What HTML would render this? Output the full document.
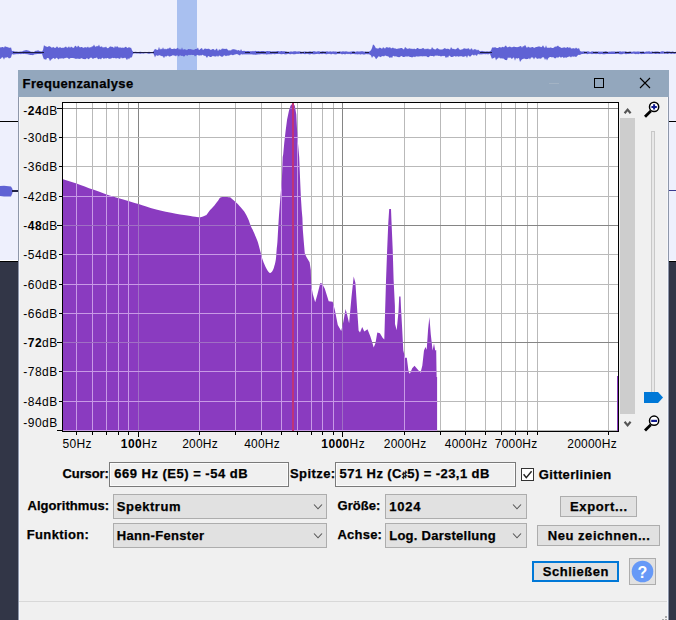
<!DOCTYPE html>
<html><head><meta charset="utf-8"><style>
html,body{margin:0;padding:0;width:676px;height:620px;overflow:hidden;background:#eef0fd;font-family:"Liberation Sans",sans-serif;}
.a{position:absolute;}
.t{position:absolute;white-space:nowrap;color:#000;font-size:12px;line-height:14px;}
.b{font-weight:bold;font-size:13px;}
.box{position:absolute;box-sizing:border-box;}
</style></head><body>
<svg class="a" style="left:0;top:0" width="676" height="620" viewBox="0 0 676 620">
  <!-- background -->
  <rect x="0" y="0" width="676" height="620" fill="#eef0fd"/>
  <rect x="0" y="260" width="676" height="1" fill="#ffffff"/>
  <rect x="0" y="261" width="676" height="1" fill="#000000"/>
  <rect x="0" y="262" width="676" height="358" fill="#323647"/>
  <rect x="0" y="121" width="18" height="1" fill="#000"/>
  <rect x="669" y="121" width="7" height="1" fill="#000"/>
  <rect x="177" y="0" width="20" height="70" fill="#a9c0f0"/>
  <!-- waveform top -->
  <rect x="0" y="52" width="676" height="1" fill="#222244"/>
  <path d="M0,47.3 L1,47.4 L2,46.9 L3,47.0 L4,47.8 L5,46.1 L6,47.1 L7,46.7 L8,47.6 L9,47.4 L10,47.9 L11,47.3 L12,51.3 L13,50.8 L14,51.3 L15,51.5 L16,51.5 L17,51.5 L18,51.8 L19,51.7 L20,51.4 L21,51.6 L22,51.5 L23,51.0 L24,50.5 L25,50.4 L26,50.1 L27,50.2 L28,50.6 L29,50.7 L30,51.3 L31,51.8 L32,51.7 L33,51.8 L34,51.9 L35,51.0 L36,50.8 L37,50.7 L38,50.3 L39,50.7 L40,51.3 L41,51.2 L42,51.5 L43,49.9 L44,44.9 L45,46.3 L46,46.2 L47,47.1 L48,46.7 L49,45.9 L50,46.5 L51,47.0 L52,47.9 L53,46.8 L54,47.6 L55,48.0 L56,47.5 L57,46.3 L58,47.5 L59,48.1 L60,46.7 L61,47.9 L62,47.7 L63,47.7 L64,47.7 L65,47.0 L66,46.5 L67,47.7 L68,47.4 L69,46.2 L70,47.9 L71,46.6 L72,47.2 L73,47.8 L74,47.8 L75,45.7 L76,46.1 L77,47.4 L78,45.5 L79,46.6 L80,47.5 L81,47.0 L82,47.1 L83,47.7 L84,47.8 L85,47.0 L86,47.6 L87,47.4 L88,46.6 L89,48.0 L90,47.1 L91,47.5 L92,46.3 L93,46.4 L94,44.5 L95,46.5 L96,46.7 L97,45.8 L98,46.4 L99,44.4 L100,46.9 L101,46.6 L102,46.4 L103,47.7 L104,47.0 L105,47.4 L106,46.6 L107,47.9 L108,48.2 L109,47.6 L110,46.6 L111,46.6 L112,47.0 L113,46.8 L114,48.3 L115,45.8 L116,47.5 L117,45.9 L118,47.0 L119,47.8 L120,47.2 L121,47.8 L122,47.7 L123,47.5 L124,48.1 L125,46.9 L126,46.8 L127,47.7 L128,47.9 L129,46.7 L130,47.9 L131,47.5 L132,50.2 L133,51.8 L134,51.9 L135,51.7 L136,51.8 L137,52.1 L138,51.9 L139,52.0 L140,51.7 L141,51.8 L142,52.3 L143,52.0 L144,52.3 L145,51.8 L146,52.3 L147,52.1 L148,52.0 L149,51.7 L150,52.0 L151,52.1 L152,52.3 L153,51.7 L154,50.5 L155,48.7 L156,49.6 L157,49.7 L158,49.9 L159,46.7 L160,49.8 L161,48.5 L162,49.6 L163,47.3 L164,49.5 L165,48.4 L166,49.5 L167,48.8 L168,48.5 L169,48.6 L170,47.2 L171,48.7 L172,49.0 L173,48.9 L174,48.5 L175,48.7 L176,49.1 L177,48.3 L178,47.8 L179,49.8 L180,48.5 L181,50.1 L182,47.3 L183,50.0 L184,48.9 L185,49.4 L186,49.5 L187,50.2 L188,48.9 L189,49.0 L190,49.2 L191,48.9 L192,49.7 L193,49.4 L194,50.0 L195,49.1 L196,49.0 L197,48.8 L198,47.5 L199,50.2 L200,49.2 L201,48.6 L202,47.9 L203,50.2 L204,49.0 L205,48.4 L206,48.7 L207,48.9 L208,48.7 L209,48.7 L210,49.4 L211,49.9 L212,49.3 L213,49.1 L214,49.2 L215,50.5 L216,48.9 L217,48.4 L218,51.2 L219,49.3 L220,49.7 L221,49.8 L222,48.5 L223,48.8 L224,48.7 L225,48.9 L226,48.8 L227,48.7 L228,50.2 L229,50.4 L230,50.3 L231,50.5 L232,49.3 L233,49.4 L234,49.1 L235,49.7 L236,49.4 L237,50.5 L238,50.2 L239,50.1 L240,51.2 L241,49.0 L242,51.0 L243,51.1 L244,50.7 L245,51.0 L246,51.3 L247,51.1 L248,51.0 L249,50.9 L250,51.4 L251,51.1 L252,51.4 L253,50.8 L254,51.4 L255,50.8 L256,51.0 L257,51.2 L258,50.9 L259,51.0 L260,51.4 L261,51.0 L262,51.1 L263,51.1 L264,51.0 L265,51.5 L266,51.3 L267,50.9 L268,51.0 L269,51.3 L270,51.1 L271,51.4 L272,51.4 L273,51.3 L274,51.4 L275,51.2 L276,51.5 L277,51.1 L278,51.1 L279,51.3 L280,51.4 L281,51.1 L282,51.1 L283,51.6 L284,51.1 L285,51.4 L286,51.2 L287,51.8 L288,51.7 L289,51.8 L290,51.8 L291,51.3 L292,51.8 L293,51.4 L294,51.3 L295,51.3 L296,51.3 L297,51.8 L298,51.3 L299,51.4 L300,51.3 L301,51.8 L302,51.8 L303,51.7 L304,51.5 L305,51.4 L306,51.5 L307,51.8 L308,51.8 L309,51.4 L310,51.3 L311,51.6 L312,51.7 L313,51.3 L314,51.2 L315,51.3 L316,51.8 L317,51.6 L318,51.2 L319,51.3 L320,51.5 L321,51.8 L322,51.3 L323,51.2 L324,51.4 L325,51.4 L326,51.6 L327,51.3 L328,51.5 L329,51.8 L330,51.3 L331,51.6 L332,51.7 L333,51.3 L334,51.6 L335,51.4 L336,51.5 L337,51.7 L338,51.8 L339,51.5 L340,51.3 L341,51.7 L342,51.5 L343,51.2 L344,51.6 L345,51.6 L346,51.3 L347,51.4 L348,51.8 L349,51.7 L350,51.7 L351,51.5 L352,51.5 L353,51.2 L354,51.2 L355,51.7 L356,51.7 L357,51.3 L358,51.5 L359,51.5 L360,51.6 L361,51.3 L362,51.2 L363,51.3 L364,51.8 L365,51.4 L366,51.4 L367,51.8 L368,51.6 L369,51.8 L370,51.1 L371,50.3 L372,48.1 L373,44.5 L374,45.1 L375,46.5 L376,48.6 L377,48.0 L378,49.1 L379,47.7 L380,47.8 L381,47.9 L382,49.0 L383,47.3 L384,47.8 L385,48.7 L386,47.2 L387,47.2 L388,47.6 L389,47.7 L390,46.9 L391,48.6 L392,48.1 L393,47.5 L394,48.4 L395,48.3 L396,48.7 L397,49.1 L398,48.4 L399,48.5 L400,48.2 L401,48.0 L402,48.0 L403,49.0 L404,49.5 L405,47.0 L406,47.8 L407,48.7 L408,48.8 L409,48.5 L410,48.2 L411,49.0 L412,48.6 L413,49.2 L414,48.6 L415,49.0 L416,49.2 L417,47.9 L418,47.9 L419,49.1 L420,48.8 L421,49.1 L422,48.4 L423,47.9 L424,48.5 L425,49.6 L426,48.6 L427,49.3 L428,48.3 L429,49.4 L430,48.9 L431,49.4 L432,46.9 L433,48.4 L434,49.1 L435,49.5 L436,49.3 L437,48.0 L438,48.4 L439,49.3 L440,49.4 L441,49.4 L442,49.5 L443,49.3 L444,48.4 L445,48.1 L446,48.9 L447,48.8 L448,48.7 L449,49.1 L450,49.7 L451,47.1 L452,48.6 L453,49.0 L454,48.8 L455,49.5 L456,48.9 L457,48.6 L458,47.4 L459,49.0 L460,49.7 L461,49.7 L462,49.3 L463,49.3 L464,48.1 L465,48.7 L466,48.5 L467,48.9 L468,48.2 L469,48.4 L470,49.9 L471,48.6 L472,48.6 L473,50.5 L474,49.0 L475,49.5 L476,49.3 L477,50.4 L478,49.4 L479,50.6 L480,51.2 L481,51.3 L482,50.8 L483,51.2 L484,51.3 L485,51.5 L486,51.4 L487,51.3 L488,51.6 L489,51.6 L490,51.3 L491,50.4 L492,47.7 L493,47.2 L494,47.8 L495,47.1 L496,47.7 L497,48.1 L498,48.1 L499,47.2 L500,47.0 L501,47.7 L502,47.1 L503,46.8 L504,47.6 L505,46.0 L506,45.4 L507,47.3 L508,47.2 L509,46.8 L510,46.5 L511,47.3 L512,47.2 L513,47.0 L514,46.5 L515,47.1 L516,46.9 L517,47.2 L518,46.9 L519,46.7 L520,46.2 L521,46.0 L522,47.7 L523,46.1 L524,46.5 L525,44.8 L526,46.4 L527,47.9 L528,46.5 L529,47.2 L530,47.5 L531,47.4 L532,47.1 L533,47.0 L534,48.0 L535,47.6 L536,46.9 L537,47.0 L538,46.5 L539,46.5 L540,46.4 L541,47.2 L542,46.7 L543,45.2 L544,47.0 L545,47.9 L546,45.3 L547,48.0 L548,47.4 L549,48.0 L550,47.6 L551,47.5 L552,48.1 L553,47.9 L554,47.4 L555,46.6 L556,46.8 L557,46.2 L558,45.5 L559,46.7 L560,47.1 L561,47.7 L562,48.0 L563,47.4 L564,47.5 L565,47.2 L566,48.3 L567,46.9 L568,47.3 L569,47.9 L570,47.0 L571,48.6 L572,48.6 L573,48.2 L574,48.2 L575,48.8 L576,47.6 L577,48.5 L578,48.8 L579,48.1 L580,50.8 L581,51.4 L582,51.5 L583,51.5 L584,51.3 L585,51.5 L586,51.6 L587,51.4 L588,51.3 L589,51.5 L590,51.9 L591,51.7 L592,51.2 L593,51.5 L594,51.4 L595,51.7 L596,51.3 L597,51.7 L598,51.4 L599,51.6 L600,51.8 L601,51.5 L602,51.7 L603,51.5 L604,51.7 L605,51.3 L606,51.2 L607,51.6 L608,51.9 L609,51.5 L610,51.8 L611,51.4 L612,51.5 L613,51.4 L614,51.6 L615,51.4 L616,51.8 L617,51.5 L618,51.4 L619,51.6 L620,51.3 L621,51.4 L622,51.8 L623,51.3 L624,51.8 L625,51.2 L626,51.5 L627,51.7 L628,51.9 L629,51.6 L630,51.5 L631,51.6 L632,51.9 L633,51.6 L634,51.5 L635,51.6 L636,51.8 L637,51.5 L638,51.6 L639,51.5 L640,51.8 L641,51.4 L642,51.8 L643,51.3 L644,51.7 L645,51.9 L646,51.5 L647,51.4 L648,51.6 L649,51.3 L650,51.6 L651,51.9 L652,51.3 L653,51.8 L654,51.7 L655,51.4 L656,51.6 L657,51.4 L658,51.6 L659,51.7 L660,51.9 L661,51.5 L662,51.3 L663,51.3 L664,51.4 L665,51.8 L666,51.8 L667,51.2 L668,51.5 L669,51.5 L670,51.4 L671,51.9 L672,51.5 L673,51.5 L674,51.9 L675,51.9 L676,51.7 L676,53.6 L675,53.8 L674,53.9 L673,53.5 L672,53.8 L671,53.9 L670,53.5 L669,53.6 L668,54.0 L667,54.0 L666,53.5 L665,53.9 L664,53.8 L663,53.5 L662,54.0 L661,53.6 L660,53.9 L659,53.9 L658,53.7 L657,53.8 L656,54.0 L655,54.1 L654,53.5 L653,53.7 L652,53.8 L651,53.9 L650,53.8 L649,53.9 L648,53.6 L647,53.9 L646,53.6 L645,54.1 L644,54.1 L643,54.1 L642,53.9 L641,54.2 L640,53.6 L639,53.9 L638,54.2 L637,53.8 L636,54.2 L635,53.9 L634,53.8 L633,53.6 L632,54.0 L631,53.8 L630,53.8 L629,54.0 L628,53.9 L627,53.9 L626,54.2 L625,54.0 L624,53.6 L623,53.9 L622,54.2 L621,54.2 L620,54.2 L619,54.0 L618,53.7 L617,53.7 L616,53.9 L615,54.1 L614,53.9 L613,53.9 L612,54.1 L611,53.9 L610,54.0 L609,54.1 L608,54.0 L607,53.9 L606,54.1 L605,54.2 L604,54.2 L603,54.2 L602,54.1 L601,54.1 L600,54.2 L599,54.0 L598,53.9 L597,53.7 L596,54.3 L595,53.7 L594,53.9 L593,53.7 L592,54.2 L591,53.7 L590,53.8 L589,53.8 L588,54.0 L587,54.2 L586,53.6 L585,53.9 L584,53.8 L583,53.9 L582,54.1 L581,54.2 L580,54.9 L579,54.8 L578,55.1 L577,56.2 L576,56.9 L575,56.6 L574,56.6 L573,56.7 L572,56.3 L571,57.4 L570,56.5 L569,56.4 L568,57.1 L567,57.3 L566,58.0 L565,57.0 L564,58.2 L563,57.2 L562,56.8 L561,58.1 L560,56.8 L559,56.8 L558,57.9 L557,57.0 L556,58.1 L555,58.5 L554,57.7 L553,56.9 L552,57.4 L551,57.0 L550,56.9 L549,57.5 L548,58.5 L547,60.6 L546,58.3 L545,59.9 L544,57.4 L543,57.2 L542,57.4 L541,58.7 L540,58.6 L539,58.6 L538,58.5 L537,58.9 L536,57.6 L535,57.6 L534,59.5 L533,57.6 L532,57.6 L531,57.6 L530,59.4 L529,58.0 L528,59.1 L527,59.1 L526,59.2 L525,58.7 L524,58.4 L523,58.9 L522,59.3 L521,60.5 L520,61.9 L519,58.0 L518,58.3 L517,58.7 L516,57.7 L515,60.8 L514,57.5 L513,57.8 L512,59.0 L511,58.3 L510,57.3 L509,58.3 L508,57.3 L507,60.2 L506,60.1 L505,59.9 L504,58.7 L503,58.6 L502,58.5 L501,58.3 L500,58.5 L499,57.3 L498,58.6 L497,58.7 L496,60.5 L495,57.1 L494,58.2 L493,57.9 L492,58.9 L491,56.4 L490,53.7 L489,54.1 L488,54.4 L487,54.1 L486,54.3 L485,54.2 L484,54.0 L483,54.3 L482,54.3 L481,54.4 L480,54.2 L479,54.4 L478,53.8 L477,55.7 L476,55.4 L475,54.4 L474,55.7 L473,54.7 L472,54.7 L471,56.0 L470,56.8 L469,55.9 L468,55.3 L467,57.9 L466,55.7 L465,56.6 L464,56.6 L463,57.1 L462,56.3 L461,56.3 L460,56.3 L459,56.4 L458,56.7 L457,55.8 L456,57.0 L455,56.0 L454,56.3 L453,56.7 L452,56.9 L451,56.9 L450,55.9 L449,55.4 L448,57.8 L447,56.4 L446,58.3 L445,56.2 L444,55.8 L443,56.2 L442,55.8 L441,56.7 L440,55.8 L439,56.1 L438,55.7 L437,55.5 L436,55.8 L435,55.6 L434,56.7 L433,56.1 L432,55.9 L431,56.1 L430,55.8 L429,57.1 L428,57.3 L427,56.7 L426,56.0 L425,56.5 L424,56.1 L423,56.4 L422,56.2 L421,56.3 L420,56.3 L419,56.5 L418,56.5 L417,56.6 L416,56.3 L415,57.3 L414,56.4 L413,56.9 L412,57.6 L411,57.1 L410,56.9 L409,56.6 L408,56.3 L407,56.7 L406,56.3 L405,56.7 L404,57.0 L403,57.1 L402,56.2 L401,56.0 L400,56.9 L399,57.2 L398,57.0 L397,56.7 L396,56.2 L395,56.5 L394,56.2 L393,55.8 L392,58.2 L391,56.8 L390,58.2 L389,57.1 L388,56.3 L387,56.2 L386,55.7 L385,55.5 L384,56.6 L383,56.1 L382,56.3 L381,56.7 L380,57.2 L379,56.1 L378,57.0 L377,58.2 L376,59.3 L375,57.3 L374,56.2 L373,56.3 L372,57.9 L371,55.4 L370,54.8 L369,54.2 L368,54.3 L367,54.3 L366,54.0 L365,54.5 L364,54.4 L363,54.4 L362,54.0 L361,54.4 L360,54.5 L359,54.0 L358,54.4 L357,54.2 L356,54.3 L355,54.3 L354,54.0 L353,54.0 L352,54.0 L351,54.3 L350,54.3 L349,53.8 L348,54.3 L347,53.8 L346,54.0 L345,54.4 L344,54.1 L343,53.9 L342,54.4 L341,53.8 L340,53.8 L339,54.1 L338,53.8 L337,53.9 L336,54.4 L335,54.2 L334,54.2 L333,53.8 L332,54.0 L331,54.4 L330,53.8 L329,53.9 L328,53.8 L327,54.2 L326,54.2 L325,53.9 L324,53.8 L323,53.7 L322,54.2 L321,53.8 L320,54.1 L319,54.2 L318,53.7 L317,53.9 L316,54.1 L315,54.2 L314,54.3 L313,54.2 L312,54.0 L311,54.0 L310,54.4 L309,54.3 L308,54.1 L307,53.8 L306,54.1 L305,54.3 L304,54.1 L303,53.8 L302,53.8 L301,54.2 L300,53.8 L299,53.7 L298,54.0 L297,53.8 L296,54.0 L295,54.2 L294,54.3 L293,54.2 L292,53.7 L291,54.2 L290,54.3 L289,54.0 L288,53.8 L287,54.2 L286,54.3 L285,54.4 L284,54.1 L283,54.1 L282,54.2 L281,54.2 L280,54.1 L279,53.8 L278,53.9 L277,54.1 L276,54.1 L275,54.3 L274,54.2 L273,53.8 L272,54.2 L271,54.2 L270,54.2 L269,54.3 L268,54.3 L267,54.5 L266,54.4 L265,54.0 L264,54.4 L263,54.0 L262,54.3 L261,54.1 L260,54.6 L259,54.3 L258,54.6 L257,54.6 L256,54.7 L255,54.7 L254,54.4 L253,54.7 L252,54.2 L251,54.6 L250,54.2 L249,54.5 L248,54.2 L247,54.4 L246,54.2 L245,54.6 L244,54.2 L243,54.5 L242,54.6 L241,54.1 L240,55.6 L239,54.9 L238,54.4 L237,54.1 L236,54.2 L235,54.4 L234,54.7 L233,55.3 L232,55.0 L231,54.6 L230,55.3 L229,55.6 L228,55.8 L227,55.6 L226,56.3 L225,55.6 L224,55.3 L223,56.4 L222,56.7 L221,56.6 L220,55.8 L219,55.6 L218,57.1 L217,55.6 L216,56.8 L215,56.3 L214,56.5 L213,55.7 L212,56.5 L211,56.9 L210,57.0 L209,56.3 L208,55.9 L207,58.1 L206,56.6 L205,55.5 L204,56.1 L203,54.8 L202,54.9 L201,55.8 L200,54.9 L199,55.9 L198,54.7 L197,55.3 L196,55.4 L195,56.4 L194,55.1 L193,55.1 L192,55.1 L191,54.8 L190,55.2 L189,54.8 L188,55.2 L187,55.9 L186,54.8 L185,55.8 L184,56.8 L183,56.0 L182,55.8 L181,56.1 L180,55.1 L179,56.4 L178,55.9 L177,55.0 L176,56.6 L175,55.4 L174,55.8 L173,55.0 L172,55.7 L171,56.0 L170,56.4 L169,56.6 L168,55.4 L167,56.0 L166,56.8 L165,55.9 L164,58.3 L163,56.3 L162,56.2 L161,55.7 L160,55.5 L159,55.1 L158,56.1 L157,55.6 L156,55.3 L155,57.5 L154,54.7 L153,53.2 L152,53.5 L151,53.3 L150,53.8 L149,53.7 L148,53.8 L147,53.2 L146,53.3 L145,53.3 L144,53.5 L143,53.7 L142,53.2 L141,53.8 L140,53.8 L139,53.5 L138,53.5 L137,53.6 L136,53.6 L135,53.2 L134,53.5 L133,53.7 L132,57.0 L131,57.8 L130,57.5 L129,59.6 L128,58.0 L127,60.2 L126,58.6 L125,57.5 L124,58.2 L123,58.0 L122,58.4 L121,57.2 L120,58.9 L119,58.4 L118,58.2 L117,57.9 L116,58.7 L115,57.8 L114,58.2 L113,58.0 L112,57.7 L111,58.8 L110,58.6 L109,59.0 L108,57.9 L107,58.1 L106,58.8 L105,57.7 L104,59.3 L103,58.0 L102,57.8 L101,59.4 L100,58.5 L99,59.0 L98,59.2 L97,57.6 L96,57.8 L95,58.2 L94,58.0 L93,59.2 L92,58.1 L91,57.5 L90,58.1 L89,58.9 L88,59.2 L87,57.7 L86,59.0 L85,59.3 L84,58.9 L83,59.1 L82,58.3 L81,58.3 L80,59.0 L79,58.8 L78,58.8 L77,58.4 L76,58.9 L75,58.4 L74,58.2 L73,58.1 L72,57.9 L71,57.9 L70,58.3 L69,59.3 L68,58.1 L67,57.8 L66,57.8 L65,58.3 L64,58.2 L63,58.9 L62,57.7 L61,59.1 L60,57.9 L59,59.3 L58,59.3 L57,57.7 L56,58.1 L55,59.2 L54,58.3 L53,58.0 L52,59.2 L51,59.5 L50,61.3 L49,58.6 L48,58.0 L47,58.0 L46,60.0 L45,58.9 L44,59.4 L43,56.9 L42,53.7 L41,54.1 L40,54.1 L39,54.0 L38,53.9 L37,53.9 L36,54.3 L35,54.3 L34,54.5 L33,55.2 L32,54.9 L31,55.0 L30,54.9 L29,54.4 L28,54.5 L27,53.9 L26,54.2 L25,53.7 L24,53.9 L23,54.0 L22,53.7 L21,54.2 L20,54.0 L19,54.0 L18,54.3 L17,54.1 L16,54.3 L15,54.2 L14,54.5 L13,54.5 L12,54.0 L11,57.4 L10,57.9 L9,58.4 L8,57.5 L7,57.1 L6,58.0 L5,57.3 L4,59.7 L3,57.4 L2,57.2 L1,58.6 L0,58.9 Z" fill="#5f62d4"/>
  <g fill="#1c1c44">
    <rect x="13" y="52" width="31" height="1"/>
    <rect x="133" y="52" width="21" height="1"/>
    <rect x="245" y="52" width="5" height="1"/><rect x="256" y="52" width="10" height="1"/><rect x="270" y="52" width="8" height="1"/><rect x="285" y="52" width="4" height="1"/>
    <rect x="300" y="52" width="4" height="1"/><rect x="305" y="52" width="8" height="1"/><rect x="320" y="52" width="6" height="1"/><rect x="337" y="52" width="3" height="1"/><rect x="352" y="52" width="3" height="1"/><rect x="365" y="52" width="4" height="1"/>
    <rect x="480" y="52" width="12" height="1"/>
    <rect x="584" y="52" width="3" height="1"/><rect x="593" y="52" width="5" height="1"/><rect x="603" y="52" width="5" height="1"/><rect x="615" y="52" width="4" height="1"/><rect x="625" y="52" width="6" height="1"/><rect x="640" y="52" width="4" height="1"/><rect x="652" y="52" width="8" height="1"/><rect x="664" y="52" width="12" height="1"/>
  </g>
  <!-- waveform 2 left -->
  <path d="M0,186 L4,185.8 L11,186.5 L12.5,189 L12.5,193 L11,196.5 L4,196.5 L0,196 Z" fill="#5f62d4"/>
  <rect x="12" y="190" width="6" height="2" fill="#222244"/>
  <rect x="669" y="190" width="7" height="1" fill="#3a3c90"/>
  <!-- dialog -->
  <rect x="18" y="70" width="651" height="550" fill="#f0f0f0"/>
  <rect x="18" y="70" width="651" height="27" fill="#93a7bd"/>
  <rect x="18" y="97" width="1" height="523" fill="#8e97aa"/>
  <rect x="19" y="97" width="1" height="523" fill="#f6f7fb"/>
  <rect x="667" y="97" width="1" height="523" fill="#f6f7fb"/>
  <rect x="668" y="97" width="1" height="523" fill="#8e97aa"/>
  <rect x="662" y="619" width="2" height="1" fill="#a8a8a8"/>
  <rect x="665" y="616" width="2" height="2" fill="#a8a8a8"/>
  <rect x="665" y="619" width="2" height="1" fill="#a8a8a8"/>

  <!-- plot -->
  <rect x="62" y="102" width="557" height="330" fill="#000"/>
  <rect x="63" y="103" width="555" height="328" fill="#fff"/>
  <defs><clipPath id="sc"><path d="M63.00,179.20 L76.50,183.40 C81.50,185.13 88.00,187.77 93.00,189.60 C98.00,191.43 102.33,193.02 106.50,194.40 C110.67,195.78 114.37,196.80 118.00,197.90 C121.63,199.00 124.87,199.97 128.30,201.00 C131.73,202.03 134.12,202.72 138.60,204.10 C143.08,205.48 148.98,207.68 155.20,209.30 C161.42,210.92 170.03,212.67 175.90,213.80 C181.77,214.93 186.55,215.52 190.40,216.10 C194.25,216.68 196.62,217.37 199.00,217.30 C201.38,217.23 203.43,216.13 204.70,215.70 C205.97,215.27 205.80,215.52 206.60,214.70 C207.40,213.88 208.20,212.33 209.50,210.80 C210.80,209.27 212.95,207.20 214.40,205.50 C215.85,203.80 217.08,201.97 218.20,200.60 C219.32,199.23 219.23,197.85 221.10,197.30 C222.97,196.75 227.62,197.07 229.40,197.30 C231.18,197.53 230.75,197.90 231.80,198.70 C232.85,199.50 234.42,200.88 235.70,202.10 C236.98,203.32 238.05,204.38 239.50,206.00 C240.95,207.62 242.95,209.63 244.40,211.80 C245.85,213.97 247.08,216.50 248.20,219.00 C249.32,221.50 250.33,224.97 251.10,226.80 C251.87,228.63 252.05,228.38 252.80,230.00 C253.55,231.62 254.72,234.35 255.60,236.50 C256.48,238.65 257.22,240.08 258.10,242.90 C258.98,245.72 260.10,250.45 260.90,253.40 C261.70,256.35 262.03,258.18 262.90,260.60 C263.77,263.02 265.02,265.88 266.10,267.90 C267.18,269.92 268.52,271.97 269.40,272.70 C270.28,273.43 270.67,273.10 271.40,272.30 C272.13,271.50 273.07,269.98 273.80,267.90 C274.53,265.82 275.33,262.75 275.80,259.80 C276.27,256.85 276.33,253.15 276.60,250.20 C276.87,247.25 277.15,245.47 277.40,242.10 C277.65,238.73 277.83,234.52 278.10,230.00 C278.37,225.48 278.63,220.23 279.00,215.00 L280.30,198.60 L281.90,179.20 L282.70,157.00 L283.20,154.20 L284.20,143.60 L285.60,131.00 L287.10,119.40 L289.00,110.60 L290.50,105.80 L292.90,102.90 L294.80,105.80 L296.30,114.50 L297.00,129.00 L298.00,143.60 L299.20,157.00 L300.00,177.30 L300.90,197.60 L301.70,210.00 L302.40,217.70 L302.80,229.40 L303.80,242.00 L304.80,253.60 L306.70,257.40 L309.60,262.30 L310.80,270.00 L311.20,285.30 L312.90,294.40 L315.20,302.30 L317.40,294.40 L320.30,283.10 L322.00,283.60 L324.80,288.70 L328.70,301.20 L332.70,301.70 L334.90,310.20 L337.80,324.90 L341.20,331.10 L343.40,321.50 L345.60,309.00 L347.00,314.30 L349.10,323.20 L351.50,296.90 L353.70,276.50 L355.40,282.70 L356.90,305.80 L358.60,330.60 L360.00,332.40 L362.20,327.00 L364.30,331.50 L367.50,329.20 L370.20,335.90 L371.90,341.20 L373.70,347.40 L375.50,343.00 L377.30,332.40 L379.90,333.30 L382.60,337.70 L384.30,339.50 L385.10,311.40 L386.00,281.20 L387.10,251.00 L388.30,222.70 L389.20,209.00 L391.00,209.00 L391.50,221.80 L392.70,249.30 L393.60,279.50 L394.90,306.00 L395.00,324.00 L396.70,330.20 L398.50,311.60 L399.20,296.50 L400.50,296.50 L401.00,308.00 L402.10,327.60 L403.30,350.60 L405.10,357.70 L406.80,357.70 L408.60,371.90 L409.90,373.70 L412.20,368.30 L414.50,365.70 L417.50,369.20 L420.50,372.80 L422.30,365.70 L424.00,350.60 L425.50,347.00 L426.70,349.70 L428.10,329.30 L429.40,316.90 L430.80,334.60 L432.60,350.60 L434.00,343.50 L435.20,350.60 L436.20,350.00 L436.60,377.00 L437.10,377.00 L437.10,431.00 L63.00,431.00 Z"/></clipPath></defs>
  <g shape-rendering="crispEdges">
<rect x="76" y="103" width="1" height="328" fill="#b9b9b9"/>
<rect x="92" y="103" width="1" height="328" fill="#b9b9b9"/>
<rect x="106" y="103" width="1" height="328" fill="#b9b9b9"/>
<rect x="118" y="103" width="1" height="328" fill="#b9b9b9"/>
<rect x="128" y="103" width="1" height="328" fill="#b9b9b9"/>
<rect x="138" y="103" width="1" height="328" fill="#858585"/>
<rect x="199" y="103" width="1" height="328" fill="#b9b9b9"/>
<rect x="235" y="103" width="1" height="328" fill="#b9b9b9"/>
<rect x="261" y="103" width="1" height="328" fill="#b9b9b9"/>
<rect x="281" y="103" width="1" height="328" fill="#b9b9b9"/>
<rect x="297" y="103" width="1" height="328" fill="#b9b9b9"/>
<rect x="311" y="103" width="1" height="328" fill="#b9b9b9"/>
<rect x="322" y="103" width="1" height="328" fill="#b9b9b9"/>
<rect x="333" y="103" width="1" height="328" fill="#b9b9b9"/>
<rect x="342" y="103" width="1" height="328" fill="#858585"/>
<rect x="404" y="103" width="1" height="328" fill="#b9b9b9"/>
<rect x="440" y="103" width="1" height="328" fill="#b9b9b9"/>
<rect x="465" y="103" width="1" height="328" fill="#b9b9b9"/>
<rect x="485" y="103" width="1" height="328" fill="#b9b9b9"/>
<rect x="501" y="103" width="1" height="328" fill="#b9b9b9"/>
<rect x="515" y="103" width="1" height="328" fill="#b9b9b9"/>
<rect x="527" y="103" width="1" height="328" fill="#b9b9b9"/>
<rect x="537" y="103" width="1" height="328" fill="#b9b9b9"/>
<rect x="608" y="103" width="1" height="328" fill="#b9b9b9"/>
<rect x="63" y="108" width="555" height="1" fill="#858585"/>
<rect x="63" y="137" width="555" height="1" fill="#b9b9b9"/>
<rect x="63" y="166" width="555" height="1" fill="#b9b9b9"/>
<rect x="63" y="196" width="555" height="1" fill="#b9b9b9"/>
<rect x="63" y="225" width="555" height="1" fill="#858585"/>
<rect x="63" y="254" width="555" height="1" fill="#b9b9b9"/>
<rect x="63" y="284" width="555" height="1" fill="#b9b9b9"/>
<rect x="63" y="313" width="555" height="1" fill="#b9b9b9"/>
<rect x="63" y="342" width="555" height="1" fill="#858585"/>
<rect x="63" y="371" width="555" height="1" fill="#b9b9b9"/>
<rect x="63" y="401" width="555" height="1" fill="#b9b9b9"/>
<rect x="63" y="430" width="555" height="1" fill="#b9b9b9"/>
  </g>
  <path d="M63.00,179.20 L76.50,183.40 C81.50,185.13 88.00,187.77 93.00,189.60 C98.00,191.43 102.33,193.02 106.50,194.40 C110.67,195.78 114.37,196.80 118.00,197.90 C121.63,199.00 124.87,199.97 128.30,201.00 C131.73,202.03 134.12,202.72 138.60,204.10 C143.08,205.48 148.98,207.68 155.20,209.30 C161.42,210.92 170.03,212.67 175.90,213.80 C181.77,214.93 186.55,215.52 190.40,216.10 C194.25,216.68 196.62,217.37 199.00,217.30 C201.38,217.23 203.43,216.13 204.70,215.70 C205.97,215.27 205.80,215.52 206.60,214.70 C207.40,213.88 208.20,212.33 209.50,210.80 C210.80,209.27 212.95,207.20 214.40,205.50 C215.85,203.80 217.08,201.97 218.20,200.60 C219.32,199.23 219.23,197.85 221.10,197.30 C222.97,196.75 227.62,197.07 229.40,197.30 C231.18,197.53 230.75,197.90 231.80,198.70 C232.85,199.50 234.42,200.88 235.70,202.10 C236.98,203.32 238.05,204.38 239.50,206.00 C240.95,207.62 242.95,209.63 244.40,211.80 C245.85,213.97 247.08,216.50 248.20,219.00 C249.32,221.50 250.33,224.97 251.10,226.80 C251.87,228.63 252.05,228.38 252.80,230.00 C253.55,231.62 254.72,234.35 255.60,236.50 C256.48,238.65 257.22,240.08 258.10,242.90 C258.98,245.72 260.10,250.45 260.90,253.40 C261.70,256.35 262.03,258.18 262.90,260.60 C263.77,263.02 265.02,265.88 266.10,267.90 C267.18,269.92 268.52,271.97 269.40,272.70 C270.28,273.43 270.67,273.10 271.40,272.30 C272.13,271.50 273.07,269.98 273.80,267.90 C274.53,265.82 275.33,262.75 275.80,259.80 C276.27,256.85 276.33,253.15 276.60,250.20 C276.87,247.25 277.15,245.47 277.40,242.10 C277.65,238.73 277.83,234.52 278.10,230.00 C278.37,225.48 278.63,220.23 279.00,215.00 L280.30,198.60 L281.90,179.20 L282.70,157.00 L283.20,154.20 L284.20,143.60 L285.60,131.00 L287.10,119.40 L289.00,110.60 L290.50,105.80 L292.90,102.90 L294.80,105.80 L296.30,114.50 L297.00,129.00 L298.00,143.60 L299.20,157.00 L300.00,177.30 L300.90,197.60 L301.70,210.00 L302.40,217.70 L302.80,229.40 L303.80,242.00 L304.80,253.60 L306.70,257.40 L309.60,262.30 L310.80,270.00 L311.20,285.30 L312.90,294.40 L315.20,302.30 L317.40,294.40 L320.30,283.10 L322.00,283.60 L324.80,288.70 L328.70,301.20 L332.70,301.70 L334.90,310.20 L337.80,324.90 L341.20,331.10 L343.40,321.50 L345.60,309.00 L347.00,314.30 L349.10,323.20 L351.50,296.90 L353.70,276.50 L355.40,282.70 L356.90,305.80 L358.60,330.60 L360.00,332.40 L362.20,327.00 L364.30,331.50 L367.50,329.20 L370.20,335.90 L371.90,341.20 L373.70,347.40 L375.50,343.00 L377.30,332.40 L379.90,333.30 L382.60,337.70 L384.30,339.50 L385.10,311.40 L386.00,281.20 L387.10,251.00 L388.30,222.70 L389.20,209.00 L391.00,209.00 L391.50,221.80 L392.70,249.30 L393.60,279.50 L394.90,306.00 L395.00,324.00 L396.70,330.20 L398.50,311.60 L399.20,296.50 L400.50,296.50 L401.00,308.00 L402.10,327.60 L403.30,350.60 L405.10,357.70 L406.80,357.70 L408.60,371.90 L409.90,373.70 L412.20,368.30 L414.50,365.70 L417.50,369.20 L420.50,372.80 L422.30,365.70 L424.00,350.60 L425.50,347.00 L426.70,349.70 L428.10,329.30 L429.40,316.90 L430.80,334.60 L432.60,350.60 L434.00,343.50 L435.20,350.60 L436.20,350.00 L436.60,377.00 L437.10,377.00 L437.10,431.00 L63.00,431.00 Z" fill="#8a3bc0"/>
  <g clip-path="url(#sc)" shape-rendering="crispEdges">
<rect x="76" y="103" width="1" height="328" fill="#c89ae6"/>
<rect x="92" y="103" width="1" height="328" fill="#c89ae6"/>
<rect x="106" y="103" width="1" height="328" fill="#c89ae6"/>
<rect x="118" y="103" width="1" height="328" fill="#c89ae6"/>
<rect x="128" y="103" width="1" height="328" fill="#c89ae6"/>
<rect x="138" y="103" width="1" height="328" fill="#a070c4"/>
<rect x="199" y="103" width="1" height="328" fill="#c89ae6"/>
<rect x="235" y="103" width="1" height="328" fill="#c89ae6"/>
<rect x="261" y="103" width="1" height="328" fill="#c89ae6"/>
<rect x="281" y="103" width="1" height="328" fill="#c89ae6"/>
<rect x="297" y="103" width="1" height="328" fill="#c89ae6"/>
<rect x="311" y="103" width="1" height="328" fill="#c89ae6"/>
<rect x="322" y="103" width="1" height="328" fill="#c89ae6"/>
<rect x="333" y="103" width="1" height="328" fill="#c89ae6"/>
<rect x="342" y="103" width="1" height="328" fill="#a070c4"/>
<rect x="404" y="103" width="1" height="328" fill="#c89ae6"/>
<rect x="440" y="103" width="1" height="328" fill="#c89ae6"/>
<rect x="465" y="103" width="1" height="328" fill="#c89ae6"/>
<rect x="485" y="103" width="1" height="328" fill="#c89ae6"/>
<rect x="501" y="103" width="1" height="328" fill="#c89ae6"/>
<rect x="515" y="103" width="1" height="328" fill="#c89ae6"/>
<rect x="527" y="103" width="1" height="328" fill="#c89ae6"/>
<rect x="537" y="103" width="1" height="328" fill="#c89ae6"/>
<rect x="608" y="103" width="1" height="328" fill="#c89ae6"/>
<rect x="63" y="108" width="555" height="1" fill="#a070c4"/>
<rect x="63" y="137" width="555" height="1" fill="#c89ae6"/>
<rect x="63" y="166" width="555" height="1" fill="#c89ae6"/>
<rect x="63" y="196" width="555" height="1" fill="#c89ae6"/>
<rect x="63" y="225" width="555" height="1" fill="#a070c4"/>
<rect x="63" y="254" width="555" height="1" fill="#c89ae6"/>
<rect x="63" y="284" width="555" height="1" fill="#c89ae6"/>
<rect x="63" y="313" width="555" height="1" fill="#c89ae6"/>
<rect x="63" y="342" width="555" height="1" fill="#a070c4"/>
<rect x="63" y="371" width="555" height="1" fill="#c89ae6"/>
<rect x="63" y="401" width="555" height="1" fill="#c89ae6"/>
<rect x="63" y="430" width="555" height="1" fill="#c89ae6"/>
  </g>
  <rect x="617" y="376" width="1" height="55" fill="#8a3bc0"/>
  <rect x="292" y="103" width="2" height="328" fill="#bf3378"/>
  <g shape-rendering="crispEdges">
<rect x="57" y="108" width="5" height="1" fill="#000"/>
<rect x="59" y="137" width="3" height="1" fill="#000"/>
<rect x="59" y="166" width="3" height="1" fill="#000"/>
<rect x="59" y="196" width="3" height="1" fill="#000"/>
<rect x="57" y="225" width="5" height="1" fill="#000"/>
<rect x="59" y="254" width="3" height="1" fill="#000"/>
<rect x="59" y="284" width="3" height="1" fill="#000"/>
<rect x="59" y="313" width="3" height="1" fill="#000"/>
<rect x="57" y="342" width="5" height="1" fill="#000"/>
<rect x="59" y="371" width="3" height="1" fill="#000"/>
<rect x="59" y="401" width="3" height="1" fill="#000"/>
<rect x="57" y="430" width="5" height="1" fill="#000"/>
<rect x="76" y="432" width="1" height="3" fill="#000"/>
<rect x="92" y="432" width="1" height="3" fill="#000"/>
<rect x="106" y="432" width="1" height="3" fill="#000"/>
<rect x="118" y="432" width="1" height="3" fill="#000"/>
<rect x="128" y="432" width="1" height="3" fill="#000"/>
<rect x="138" y="432" width="1" height="5" fill="#000"/>
<rect x="199" y="432" width="1" height="3" fill="#000"/>
<rect x="235" y="432" width="1" height="3" fill="#000"/>
<rect x="261" y="432" width="1" height="3" fill="#000"/>
<rect x="281" y="432" width="1" height="3" fill="#000"/>
<rect x="297" y="432" width="1" height="3" fill="#000"/>
<rect x="311" y="432" width="1" height="3" fill="#000"/>
<rect x="322" y="432" width="1" height="3" fill="#000"/>
<rect x="333" y="432" width="1" height="3" fill="#000"/>
<rect x="342" y="432" width="1" height="5" fill="#000"/>
<rect x="404" y="432" width="1" height="3" fill="#000"/>
<rect x="440" y="432" width="1" height="3" fill="#000"/>
<rect x="465" y="432" width="1" height="3" fill="#000"/>
<rect x="485" y="432" width="1" height="3" fill="#000"/>
<rect x="501" y="432" width="1" height="3" fill="#000"/>
<rect x="515" y="432" width="1" height="3" fill="#000"/>
<rect x="527" y="432" width="1" height="3" fill="#000"/>
<rect x="537" y="432" width="1" height="3" fill="#000"/>
<rect x="608" y="432" width="1" height="3" fill="#000"/>
  </g>
  <!-- scrollbar -->
  <rect x="620" y="118" width="15" height="296" fill="#cdcdcd"/>
  <path d="M624.6,113.2 L627.6,109.6 L630.6,113.2" fill="none" stroke="#555" stroke-width="2.2"/>
  <path d="M624.6,421.8 L627.6,425.4 L630.6,421.8" fill="none" stroke="#555" stroke-width="2.2"/>
  <!-- slider -->
  <rect x="651.5" y="131.5" width="3" height="262" fill="#e8e8e8" stroke="#c8c8c8" stroke-width="1"/>
  <path d="M644,392 L658,392 L663,397.5 L658,403 L644,403 Z" fill="#0078d7"/>
  <!-- zoom icons -->
  <g>
    <line x1="645" y1="116.8" x2="650.8" y2="111" stroke="#000" stroke-width="2.8"/>
    <circle cx="654.1" cy="106.9" r="4.6" fill="#fff" stroke="#000" stroke-width="1.5"/>
    <path d="M651.4,106.9 H656.8 M654.1,104.2 V109.6" stroke="#101a90" stroke-width="2"/>
    <line x1="645" y1="430.5" x2="650.8" y2="424.7" stroke="#000" stroke-width="2.8"/>
    <circle cx="654.1" cy="420.7" r="4.6" fill="#fff" stroke="#000" stroke-width="1.5"/>
    <path d="M651.2,420.9 H657" stroke="#101a90" stroke-width="2.2"/>
  </g>
  <!-- title buttons -->
  <rect x="549" y="83" width="10" height="1" fill="#a3b3c4"/>
  <rect x="594.5" y="78.5" width="9" height="9" fill="none" stroke="#000" stroke-width="1"/>
  <path d="M640,78 L650,88 M650,78 L640,88" stroke="#000" stroke-width="1.1"/>
  <!-- separator -->
  <rect x="19" y="601" width="648" height="1" fill="#d8d8d8"/>
</svg>

<svg class="a" style="left:0;top:0" width="676" height="620" viewBox="0 0 676 620" font-family="Liberation Sans, sans-serif">
  <!-- text boxes -->
  <rect x="109.5" y="462.5" width="179" height="24" fill="#f0f0f0" stroke="#7a7a7a"/>
  <rect x="110.5" y="463.5" width="177" height="22" fill="none" stroke="#fbfbfb"/>
  <rect x="335.5" y="462.5" width="180" height="24" fill="#f0f0f0" stroke="#7a7a7a"/>
  <rect x="336.5" y="463.5" width="178" height="22" fill="none" stroke="#fbfbfb"/>
  <!-- checkbox -->
  <rect x="521.5" y="468.5" width="12" height="12" fill="#fff" stroke="#333"/>
  <path d="M523.6,474.2 L526.3,477.6 L531.6,471.2" fill="none" stroke="#222" stroke-width="1.45"/>
  <!-- combos -->
  <rect x="113.5" y="494.5" width="213" height="24" fill="#e1e1e1" stroke="#adadad"/>
  <rect x="113.5" y="523.5" width="213" height="24" fill="#e1e1e1" stroke="#adadad"/>
  <rect x="385.5" y="494.5" width="141" height="24" fill="#e1e1e1" stroke="#adadad"/>
  <rect x="385.5" y="523.5" width="141" height="24" fill="#e1e1e1" stroke="#adadad"/>
  <g fill="none" stroke="#555" stroke-width="1.1">
    <path d="M314,504.5 L318,508.8 L322,504.5"/>
    <path d="M314,533.5 L318,537.8 L322,533.5"/>
    <path d="M513,504.5 L517,508.8 L521,504.5"/>
    <path d="M513,533.5 L517,537.8 L521,533.5"/>
  </g>
  <!-- buttons -->
  <rect x="560.5" y="496.5" width="76" height="20" fill="#e1e1e1" stroke="#adadad"/>
  <rect x="537.5" y="525.5" width="122" height="20" fill="#e1e1e1" stroke="#adadad"/>
  <rect x="533" y="562" width="85" height="19" fill="#e1e1e1" stroke="#0078d7" stroke-width="2"/>
  <rect x="629.5" y="558.5" width="26" height="26" fill="#e1e1e1" stroke="#adadad"/>
  <circle cx="642.5" cy="571.5" r="10.8" fill="#6699f7"/>
  <text x="642.5" y="577.8" font-size="16" font-weight="bold" text-anchor="middle" fill="#fff">?</text>
<text x="22.6" y="88" font-size="13" font-weight="bold" letter-spacing="0.36" stroke="#000" stroke-width="0.25" text-anchor="start" fill="#000">Frequenzanalyse</text>
<text x="57.6" y="115" font-size="12" font-weight="normal" letter-spacing="0.45" text-anchor="end" fill="#000">-<tspan font-weight="bold">24</tspan>dB</text>
<text x="57.6" y="142" font-size="12" font-weight="normal" letter-spacing="0.45" text-anchor="end" fill="#000">-30dB</text>
<text x="57.6" y="171" font-size="12" font-weight="normal" letter-spacing="0.45" text-anchor="end" fill="#000">-36dB</text>
<text x="57.6" y="201" font-size="12" font-weight="normal" letter-spacing="0.45" text-anchor="end" fill="#000">-42dB</text>
<text x="57.6" y="230" font-size="12" font-weight="normal" letter-spacing="0.45" text-anchor="end" fill="#000">-<tspan font-weight="bold">48</tspan>dB</text>
<text x="57.6" y="259" font-size="12" font-weight="normal" letter-spacing="0.45" text-anchor="end" fill="#000">-54dB</text>
<text x="57.6" y="289" font-size="12" font-weight="normal" letter-spacing="0.45" text-anchor="end" fill="#000">-60dB</text>
<text x="57.6" y="318" font-size="12" font-weight="normal" letter-spacing="0.45" text-anchor="end" fill="#000">-66dB</text>
<text x="57.6" y="347" font-size="12" font-weight="normal" letter-spacing="0.45" text-anchor="end" fill="#000">-<tspan font-weight="bold">72</tspan>dB</text>
<text x="57.6" y="376" font-size="12" font-weight="normal" letter-spacing="0.45" text-anchor="end" fill="#000">-78dB</text>
<text x="57.6" y="406" font-size="12" font-weight="normal" letter-spacing="0.45" text-anchor="end" fill="#000">-84dB</text>
<text x="57.6" y="427" font-size="12" font-weight="normal" letter-spacing="0.45" text-anchor="end" fill="#000">-90dB</text>
<text x="77.2" y="448" font-size="12" font-weight="normal" letter-spacing="0.4" text-anchor="middle" fill="#000">50Hz</text>
<text x="139.2" y="448" font-size="12" font-weight="normal" letter-spacing="0.4" text-anchor="middle" fill="#000"><tspan font-weight="bold">100</tspan>Hz</text>
<text x="200.1" y="448" font-size="12" font-weight="normal" letter-spacing="0.22" text-anchor="middle" fill="#000">200Hz</text>
<text x="262.1" y="448" font-size="12" font-weight="normal" letter-spacing="0.22" text-anchor="middle" fill="#000">400Hz</text>
<text x="343.2" y="448" font-size="12" font-weight="normal" letter-spacing="0.4" text-anchor="middle" fill="#000"><tspan font-weight="bold">1000</tspan>Hz</text>
<text x="405.1" y="448" font-size="12" font-weight="normal" letter-spacing="0.22" text-anchor="middle" fill="#000">2000Hz</text>
<text x="466.1" y="448" font-size="12" font-weight="normal" letter-spacing="0.22" text-anchor="middle" fill="#000">4000Hz</text>
<text x="516.1" y="448" font-size="12" font-weight="normal" letter-spacing="0.22" text-anchor="middle" fill="#000">7000Hz</text>
<text x="592.1" y="448" font-size="12" font-weight="normal" letter-spacing="0.22" text-anchor="middle" fill="#000">20000Hz</text>
<text x="62.5" y="478" font-size="13" font-weight="bold" letter-spacing="-0.1" stroke="#000" stroke-width="0.25" text-anchor="start" fill="#000">Cursor:</text>
<text x="114.2" y="478" font-size="13" font-weight="bold" letter-spacing="0.5" stroke="#000" stroke-width="0.25" text-anchor="start" fill="#000">669 Hz (E5) = -54 dB</text>
<text x="290" y="478" font-size="13" font-weight="bold" letter-spacing="0.42" stroke="#000" stroke-width="0.25" text-anchor="start" fill="#000">Spitze:</text>
<text x="339.6" y="478" font-size="13" font-weight="bold" letter-spacing="0.42" stroke="#000" stroke-width="0.25" text-anchor="start" fill="#000">571 Hz (C<tspan font-size="10" font-weight="normal" stroke-width="0.4">&#9839;</tspan>5) = -23,1 dB</text>
<text x="538.8" y="479" font-size="13" font-weight="bold" letter-spacing="0.35" stroke="#000" stroke-width="0.25" text-anchor="start" fill="#000">Gitterlinien</text>
<text x="27.5" y="510" font-size="13" font-weight="bold" letter-spacing="0.06" stroke="#000" stroke-width="0.25" text-anchor="start" fill="#000">Algorithmus:</text>
<text x="116.8" y="511" font-size="13" font-weight="bold" letter-spacing="0.53" stroke="#000" stroke-width="0.25" text-anchor="start" fill="#000">Spektrum</text>
<text x="26.7" y="539" font-size="13" font-weight="bold" letter-spacing="0.38" stroke="#000" stroke-width="0.25" text-anchor="start" fill="#000">Funktion:</text>
<text x="116.8" y="540" font-size="13" font-weight="bold" letter-spacing="0.31" stroke="#000" stroke-width="0.25" text-anchor="start" fill="#000">Hann-Fenster</text>
<text x="337.5" y="510" font-size="13" font-weight="bold" letter-spacing="0.04" stroke="#000" stroke-width="0.25" text-anchor="start" fill="#000">Gr&#246;&#223;e:</text>
<text x="389.2" y="511" font-size="13" font-weight="bold" letter-spacing="0.83" stroke="#000" stroke-width="0.25" text-anchor="start" fill="#000">1024</text>
<text x="337.5" y="539" font-size="13" font-weight="bold" letter-spacing="0.22" stroke="#000" stroke-width="0.25" text-anchor="start" fill="#000">Achse:</text>
<text x="389.2" y="540" font-size="13" font-weight="bold" letter-spacing="0.26" stroke="#000" stroke-width="0.25" text-anchor="start" fill="#000">Log. Darstellung</text>
<text x="570" y="511" font-size="13" font-weight="bold" letter-spacing="0.64" stroke="#000" stroke-width="0.25" text-anchor="start" fill="#000">Export...</text>
<text x="547.8" y="540" font-size="13" font-weight="bold" letter-spacing="0.53" stroke="#000" stroke-width="0.25" text-anchor="start" fill="#000">Neu zeichnen...</text>
<text x="542.7" y="576" font-size="13" font-weight="bold" letter-spacing="0.55" stroke="#000" stroke-width="0.25" text-anchor="start" fill="#000">Schlie&#223;en</text>

</svg>
</body></html>
